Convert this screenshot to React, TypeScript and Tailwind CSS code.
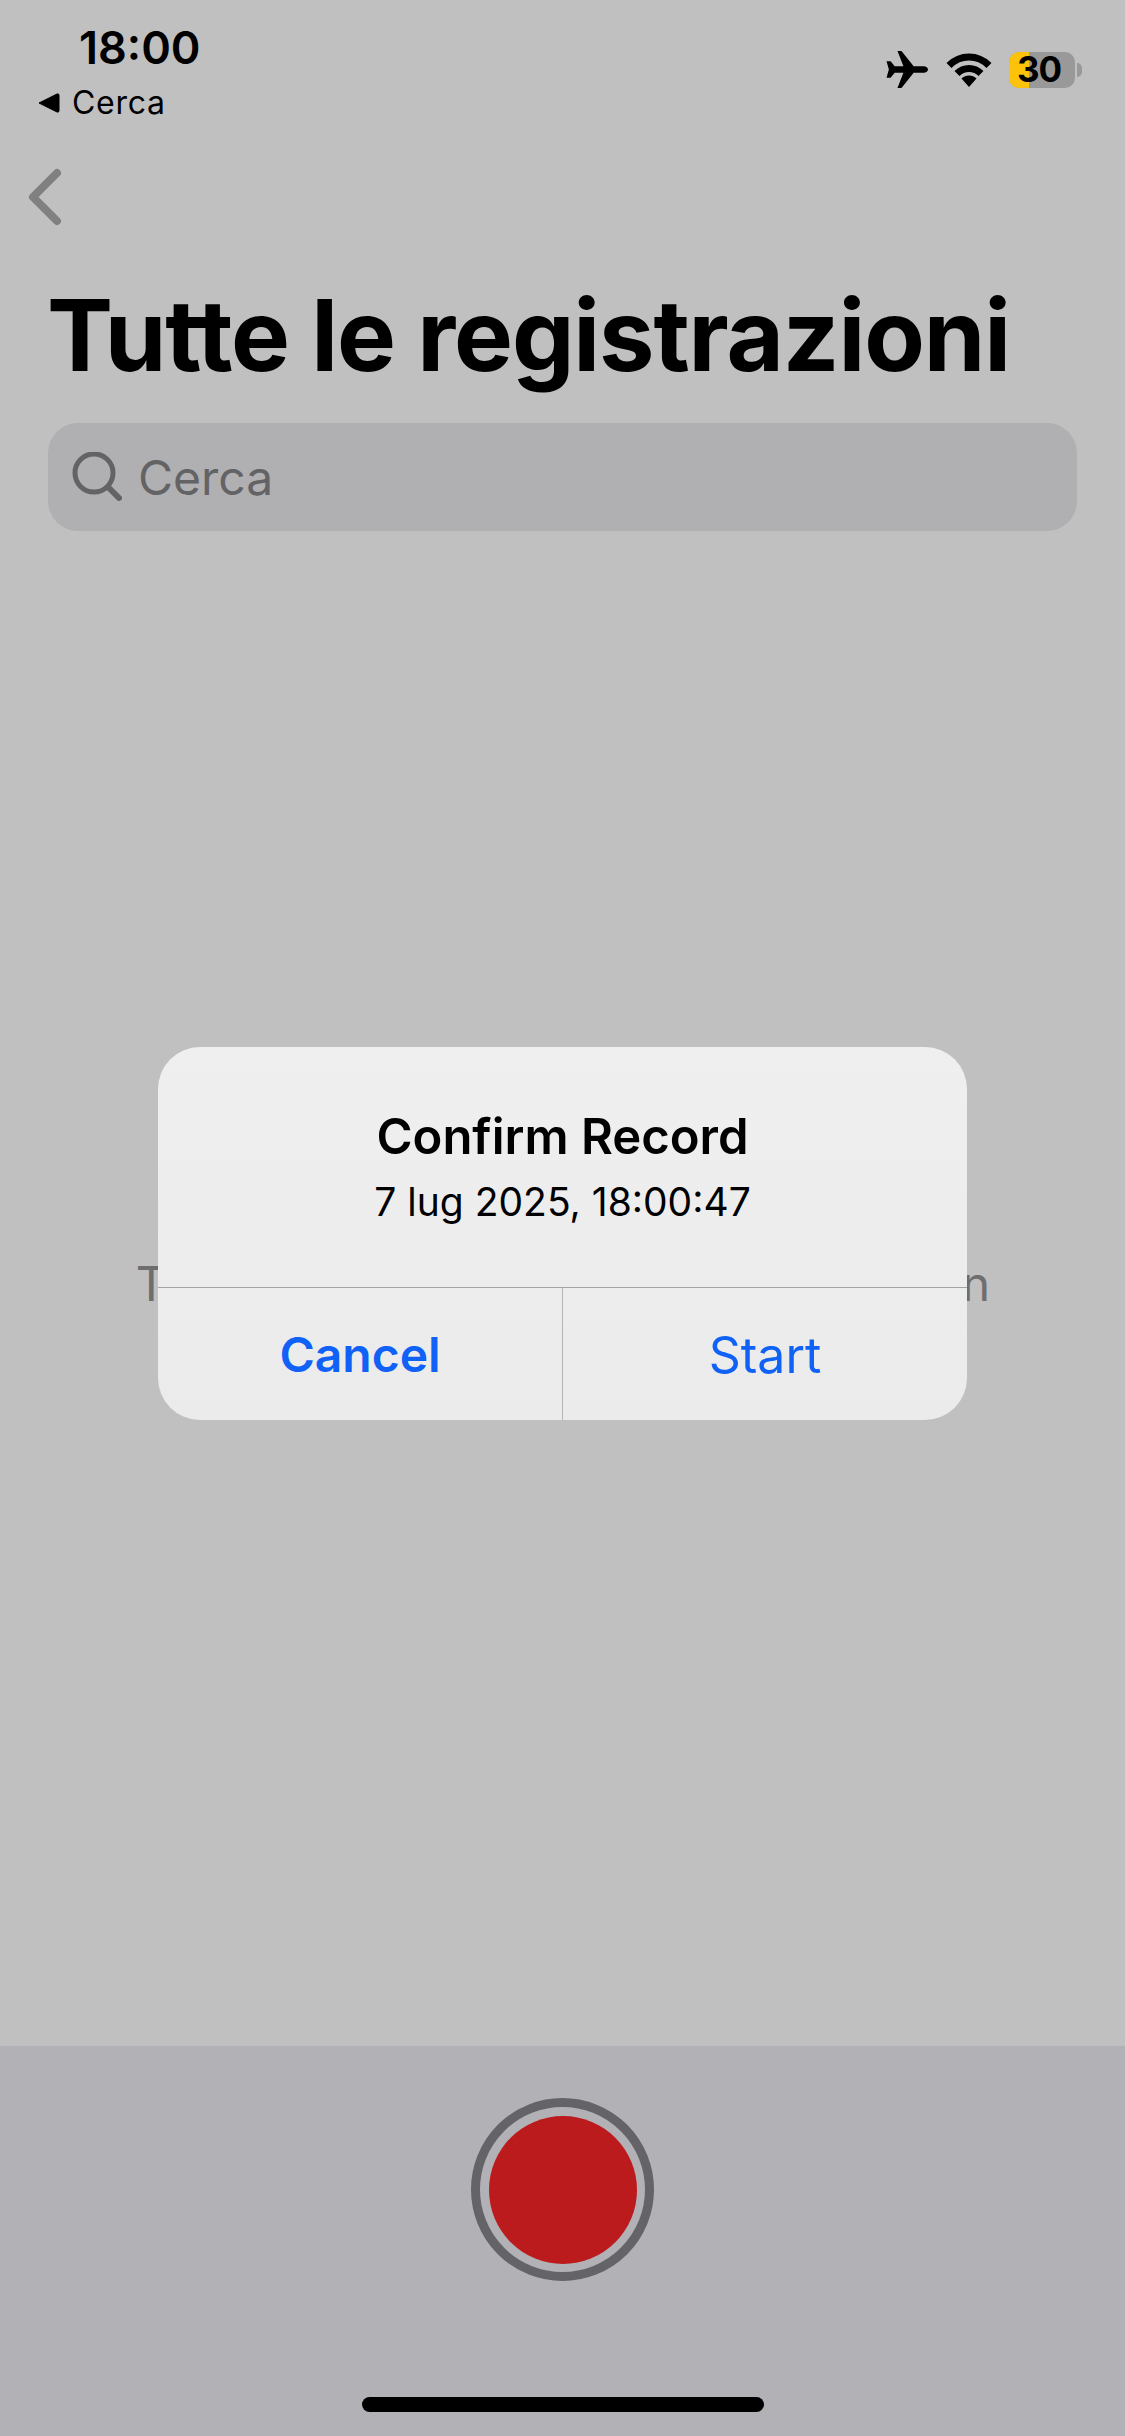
function Plane() {
  return (
    <svg width="42" height="37" viewBox="0 0 41 36" className="block">
      <path d="M41 18c0-1.800-2-3.200-4-3.200H27L15.500.5c-.3-.4-.7-.5-1-.5h-3.300l5.800 14.800H8.500L4.500 10H.5l2.300 8-2.300 8h4l4-4.800H17L11.200 36h3.300c.3 0 .7-.1 1-.5L27 21.200h10c2 0 4-1.400 4-3.200z" fill="#000" />
    </svg>
  );
}

function Wifi() {
  return (
    <svg width="46" height="34" viewBox="0 0 46 34" className="block">
      <path d="M3 12.500C8.500 7 15.500 4 23 4s14.500 3 20 8.500" fill="none" stroke="#000" strokeWidth="7" />
      <path d="M11 20.500c3.200-3.200 7.400-5 12-5s8.800 1.800 12 5" fill="none" stroke="#000" strokeWidth="7" />
      <path d="M15.500 25.500c2-1.900 4.600-3 7.500-3s5.500 1.100 7.500 3L23 34z" fill="#000" />
    </svg>
  );
}

function Battery() {
  return (
    <div className="flex items-center">
      <div className="relative flex h-[36px] w-[66px] items-center justify-center rounded-[10px] bg-[#999999] pr-[6px]">
        <div className="absolute inset-y-0 left-0 w-[20px] rounded-l-[10px] bg-[#fdc30a]" />
        <span className="relative text-[35px] leading-none font-bold tracking-[-1px] text-black">30</span>
      </div>
      <div className="ml-[2px] h-[14px] w-[5px] rounded-r-full bg-[#999999]" />
    </div>
  );
}

export default function App() {
  return (
    <div className="relative flex h-[2436px] w-[1125px] flex-col overflow-hidden bg-[#c0c0c0] font-['Inter','Liberation_Sans',sans-serif] text-black">
      <header className="flex h-[168px] shrink-0 items-start justify-between">
        <div className="flex flex-col">
          <div className="mt-[21px] ml-[79px] text-[45px] leading-[54px] font-semibold">18:00</div>
          <div className="mt-[9px] ml-[37px] flex items-center gap-[11px]">
            <svg width="24" height="22" viewBox="0 0 24 22" className="block">
              <path d="M2 11 20 2a1.500 1.500 0 0 1 2 1.300v15.400a1.500 1.500 0 0 1-2 1.300z" fill="#000" stroke="#000" strokeWidth="1" strokeLinejoin="round" />
            </svg>
            <span className="text-[32px] leading-[38px] font-normal tracking-[0.7px]">Cerca</span>
          </div>
        </div>
        <div className="mt-[51px] mr-[43px] flex items-center">
          <div className="mr-[18px]"><Plane /></div>
          <div className="mr-[17px]"><Wifi /></div>
          <Battery />
        </div>
      </header>

      <main className="flex min-h-0 flex-1 flex-col">
        <div className="ml-[28px] h-[58px]">
          <svg width="34" height="58" viewBox="0 0 34 58" className="block">
            <path d="M29 5 5 29l24 24" fill="none" stroke="#808080" strokeWidth="8" strokeLinecap="round" strokeLinejoin="round" />
          </svg>
        </div>
        <h1 className="mt-[49px] ml-[47px] text-[99px] leading-[120px] font-bold tracking-[-1.1px] whitespace-nowrap">
          Tutte le registrazioni
        </h1>
        <div className="mx-[48px] mt-[28px] flex h-[108px] items-center rounded-[30px] bg-[#b0b0b2] pl-[24px]">
          <svg width="50" height="50" viewBox="0 0 50 50" className="block">
            <circle cx="22" cy="21" r="19" fill="none" stroke="#636366" strokeWidth="5" />
            <path d="M36 35l11 11" stroke="#636366" strokeWidth="6" strokeLinecap="round" />
          </svg>
          <span className="ml-[16px] pt-[2px] text-[48px] leading-none text-[#636366]">Cerca</span>
        </div>
        <div className="flex flex-1 items-center justify-center pb-[10px]">
          <p className="text-[48px] tracking-[-0.9px] whitespace-nowrap text-[#6e6e6e]">Tap the record button to start a session</p>
        </div>
      </main>

      <footer className="flex h-[390px] shrink-0 flex-col items-center bg-[#b2b1b6]">
        <div className="mt-[52px] flex size-[183px] items-center justify-center rounded-full border-[9px] border-[#636368]">
          <div className="size-[148px] rounded-full bg-[#bc1b1d]" />
        </div>
        <div className="mt-[116px] h-[15px] w-[402px] rounded-full bg-black" />
      </footer>

      <div className="absolute top-[1047px] left-[158px] flex h-[373px] w-[809px] flex-col overflow-hidden rounded-[42px] bg-linear-to-b from-[#efefef] to-[#ebebeb]">
        <div className="flex h-[241px] flex-col items-center border-b border-[#a3a3a3]">
          <div className="mt-[60px] text-[49px] leading-[60px] font-semibold">Confirm Record</div>
          <div className="mt-[11px] text-[39px] leading-[47px]">7 lug 2025, 18:00:47</div>
        </div>
        <div className="flex flex-1">
          <div className="flex flex-1 items-center justify-center border-r border-[#b5b5b5] pt-[2px] text-[48px] font-semibold text-[#0f62f5]">Cancel</div>
          <div className="flex flex-1 items-center justify-center pt-[2px] text-[50px] text-[#0f62f5]">Start</div>
        </div>
      </div>
    </div>
  );
}
